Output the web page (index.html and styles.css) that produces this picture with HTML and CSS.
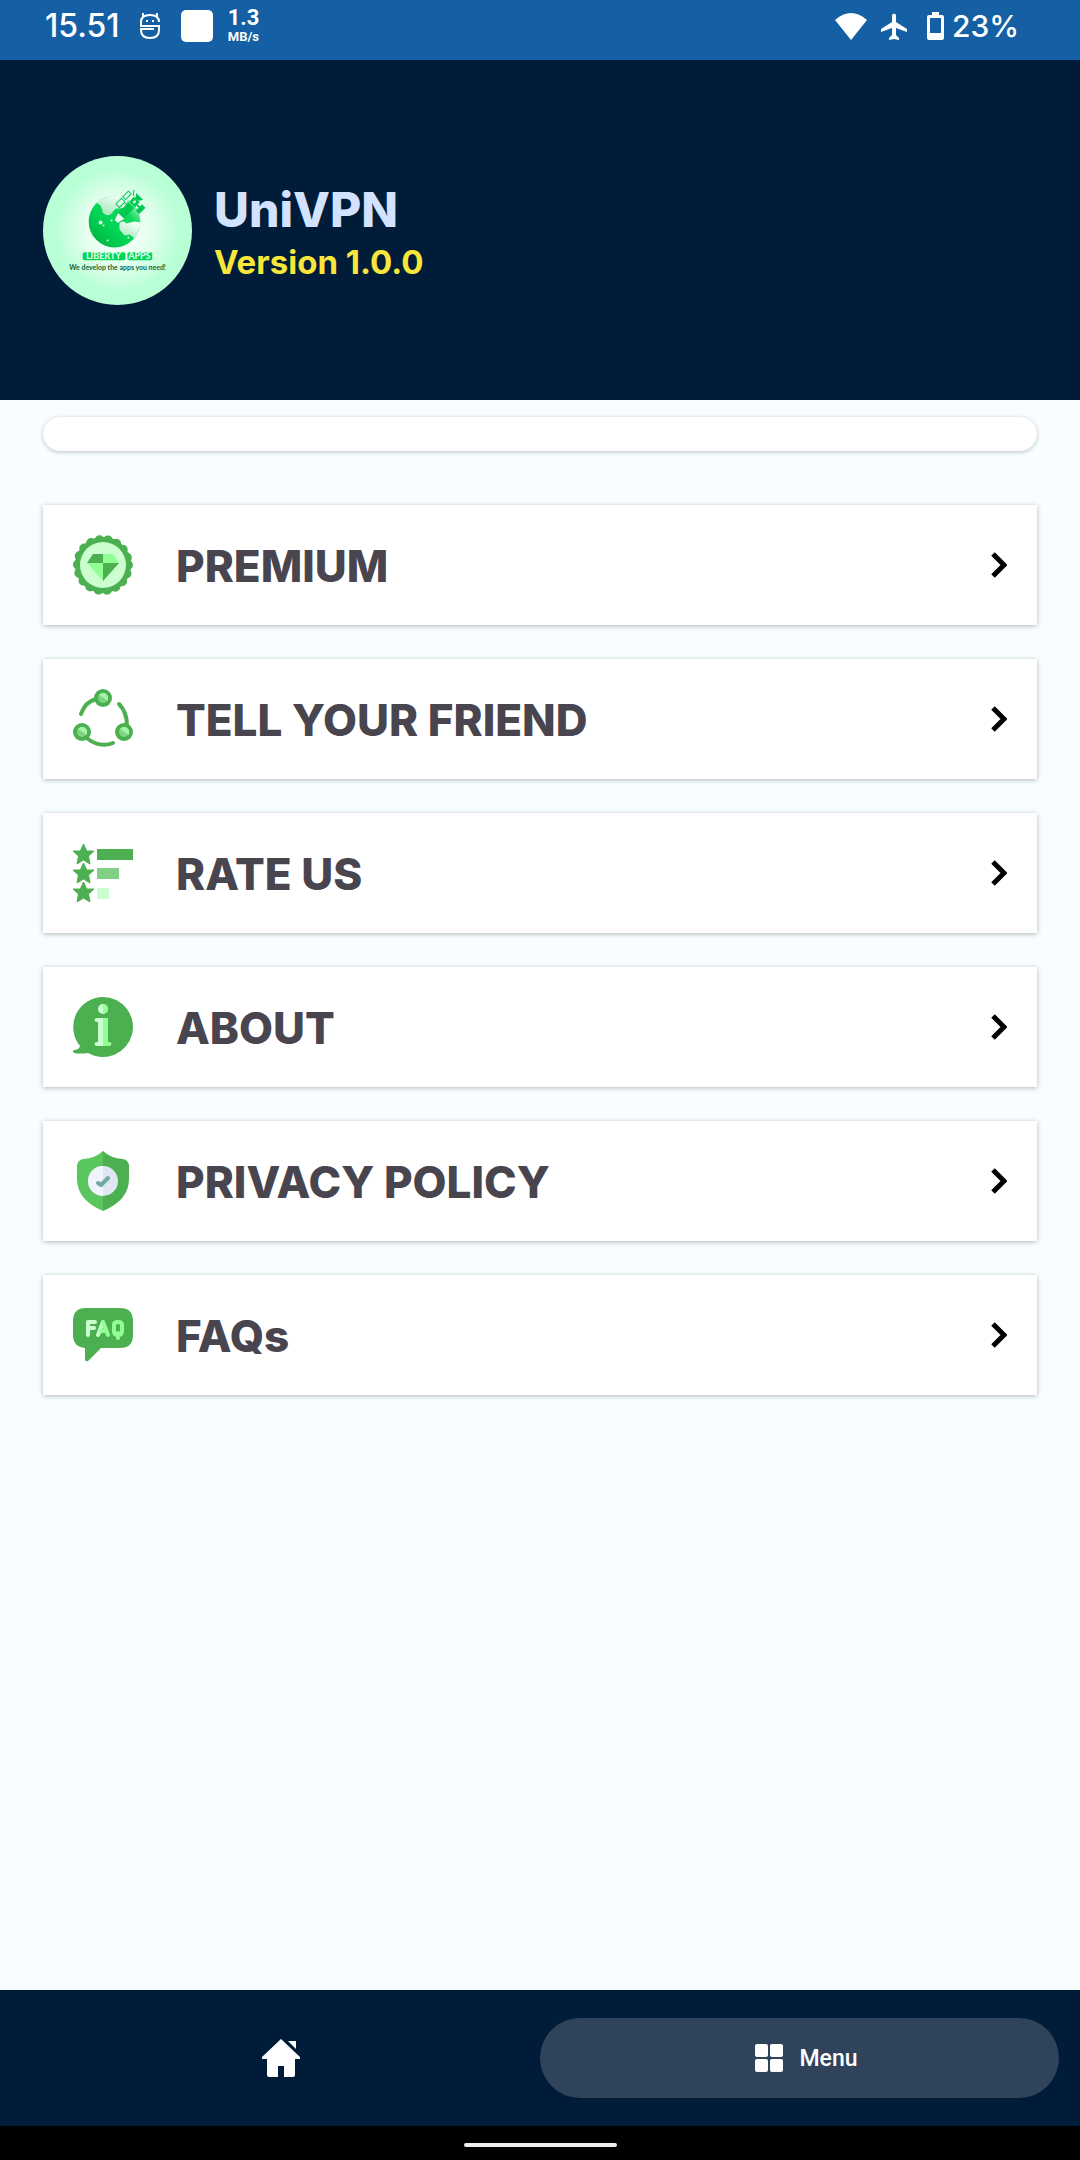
FILE: index.html
```html
<!DOCTYPE html>
<html lang="en">
  <head>
    <meta charset="UTF-8" />
    <meta name="viewport" content="width=device-width, initial-scale=1.0" />
    <title>UniVPN</title>
    <link rel="stylesheet" href="styles.css">
  </head>
  <body>
    <div class="status-bar">
      <div class="status-group">
        <span class="clock">15.51</span>
        <svg class="status-face" width="20" height="28" viewBox="0 0 20 28" fill="none" stroke="#fff" stroke-width="2">
          <path d="M19 10Q19 3 10 3T1 10V14H19V18Q19 26 10 26T1 18V17H14M3 1V5M17 1V5" />
          <path d="M6 9h2M12 9h2" />
        </svg>
        <span class="status-square"></span>
        <div class="net-speed">
          <b>1.3</b>
          <small>MB/s</small>
        </div>
      </div>
      <div class="status-group">
        <svg class="status-wifi" width="32" height="27" viewBox="0 0 32 27" fill="#fff">
          <path d="M0 7Q16-7 32 7L16 27Z" />
        </svg>
        <svg class="status-plane" width="26" height="27" viewBox="0 0 26 27" fill="#fff">
          <path d="M11 2Q13-1 15 2V9L26 16V19L15 15V22L18 25V27L13 26L8 27V25L11 22V15L0 19V16L11 9Z" />
        </svg>
        <svg width="17" height="28" viewBox="0 0 17 28" fill="#fff">
          <path fill-rule="evenodd" d="M5 0H12V3H15Q17 3 17 5V26Q17 28 15 28H2Q0 28 0 26V5Q0 3 2 3H5ZM3 6V21H14V6Z" />
        </svg>
        <span class="battery">23%</span>
      </div>
    </div>

    <header class="header">
      <svg class="avatar" viewBox="0 0 150 150" role="img" aria-label="Liberty Apps logo">
        <defs>
          <radialGradient id="glow">
            <stop offset="0" stop-color="#fff" />
            <stop offset="0.55" stop-color="#e4ffee" />
            <stop offset="1" stop-color="#b9ffd6" />
          </radialGradient>
          <linearGradient id="globe" x1="0" y1="1" x2="1" y2="0">
            <stop offset="0" stop-color="#00a83c" />
            <stop offset="0.4" stop-color="#00d455" />
            <stop offset="0.7" stop-color="#12da60" />
            <stop offset="1" stop-color="#f0fff6" />
          </linearGradient>
          <linearGradient id="land" x1="0" y1="1" x2="0.5" y2="0">
            <stop offset="0" stop-color="#9ae5b4" />
            <stop offset="1" stop-color="#f4fff8" />
          </linearGradient>
          <clipPath id="disc"><circle cx="72" cy="66" r="26" /></clipPath>
        </defs>
        <circle cx="75" cy="75" r="75" fill="#b9ffd6" />
        <circle cx="75" cy="75" r="62" fill="url(#glow)" />
        <circle cx="72" cy="66" r="26" fill="url(#globe)" />
        <g clip-path="url(#disc)">
          <path d="M53 47Q60 49 60 57Q64 61 68 59L73 53L82 52L88 38L60 38Z" fill="url(#land)" />
          <path d="M77 66Q82 65 84 68L92 66L100 67L94 84L87 79L82 80L77 74Z" fill="url(#land)" />
        </g>
        <g fill="#d8ffe6">
          <circle cx="58" cy="67" r="2" />
          <circle cx="61" cy="70" r="1" />
          <circle cx="69" cy="65" r="1" />
          <circle cx="65" cy="85" r="1" />
          <circle cx="86" cy="82" r="1" />
        </g>
        <g transform="translate(73 66) rotate(-46)">
          <path d="M0-2L9-5V5L0 3Z" fill="#effff5" stroke="#00c950" />
          <path d="M8-4H23V4H8Z" fill="#00c950" />
          <path d="M24-4H31V4H24ZM31-2L35-5V5L31 2Z" fill="#00c950" />
          <path d="M13-12H21V-7H13ZM23-12H31V-8H23ZM20-7V-4M31-5L36-9" fill="none" stroke="#00c950" />
          <path d="M22 7H31V12H22ZM26 4H28V7H26Z" fill="#00c950" />
          <path d="M26-1H29V1H26Z" fill="#fff" />
        </g>
        <rect x="40" y="97" width="43" height="8" rx="2" fill="#00d455" />
        <rect x="85" y="97" width="25" height="8" rx="2" fill="#00d455" />
        <text class="logo-name" x="61" y="104" text-anchor="middle">LIBERTY</text>
        <text class="logo-name" x="97" y="104" text-anchor="middle">APPS</text>
        <text class="logo-tagline" x="75" y="115" text-anchor="middle">We develop the apps you need!</text>
      </svg>
      <div class="app-info">
        <h1>UniVPN</h1>
        <p class="version">Version 1.0.0</p>
      </div>
    </header>

    <main class="content">
      <div class="banner"></div>

      <nav class="menu" aria-label="Menu">
        <a class="menu-item" href="#premium">
          <svg class="menu-icon" viewBox="0 0 60 60">
            <circle cx="30" cy="30" r="28" fill="#4caf50" />
            <circle cx="30" cy="30" r="25" fill="none" stroke="#4caf50" stroke-width="10" stroke-linecap="round" stroke-dasharray="0 8.727" />
            <circle cx="30" cy="30" r="23" fill="#ccffcf" />
            <path d="M20 19H40L46 28L30 46L14 28Z" fill="#90ff94" />
            <path d="M20 19H30V28H14ZM30 28H46L30 46Z" fill="#4caf50" />
          </svg>
          <span class="menu-label">PREMIUM</span>
          <svg class="chevron" viewBox="0 0 16 26"><path d="M2 2L13 13L2 24" /></svg>
        </a>
        <a class="menu-item" href="#share">
          <svg class="menu-icon" viewBox="0 0 60 60">
            <path d="M8 25Q12 13 23 10M46 15Q54 23 54 37M15 50Q27 59 40 54" fill="none" stroke="#4caf50" stroke-width="4" stroke-linecap="round" />
            <g fill="#4caf50">
              <circle cx="30" cy="9" r="9" />
              <circle cx="9" cy="43" r="9" />
              <circle cx="51" cy="43" r="9" />
            </g>
            <g fill="#7bd67f">
              <circle cx="30" cy="9" r="5" />
              <circle cx="9" cy="43" r="5" />
              <circle cx="51" cy="43" r="5" />
            </g>
            <path d="M26 6Q31 1 35 7V12ZM5 40Q10 35 14 41V46ZM47 40Q52 35 56 41V46Z" fill="#a5f2a8" />
          </svg>
          <span class="menu-label">TELL YOUR FRIEND</span>
          <svg class="chevron" viewBox="0 0 16 26"><path d="M2 2L13 13L2 24" /></svg>
        </a>
        <a class="menu-item" href="#rate">
          <svg class="menu-icon" viewBox="0 0 60 60">
            <defs>
              <path id="star" d="M10.500 0L13.700 7H21L15.500 12L17 20L10.500 16L4 20L5.500 12L0 7H7.300Z" />
            </defs>
            <g fill="#4caf50" stroke="#4caf50">
              <use href="#star" y="1" />
              <use href="#star" y="20" />
              <use href="#star" y="39" />
            </g>
            <path d="M24 6H60V17H24Z" fill="#4caf50" />
            <path d="M24 25H46V36H24Z" fill="#82cf85" />
            <path d="M24 45H36V56H24Z" fill="#ccffcf" />
          </svg>
          <span class="menu-label">RATE US</span>
          <svg class="chevron" viewBox="0 0 16 26"><path d="M2 2L13 13L2 24" /></svg>
        </a>
        <a class="menu-item" href="#about">
          <svg class="menu-icon" viewBox="0 0 60 60">
            <path d="M30 0A30 30 0 1 1 15 56Q8 57 1 56Q-1 54 1 53Q6 53 7 49A30 30 0 0 1 30 0Z" fill="#4caf50" />
            <circle cx="30" cy="12" r="5" fill="#ccffcf" />
            <path d="M30 7A5 5 0 0 1 30 17Z" fill="#90ff94" />
            <path d="M23 21H30V49H23Q20 47 23 45H25V25H23Q20 23 23 21Z" fill="#ccffcf" />
            <path d="M30 21H35V45H37Q40 47 37 49H30Z" fill="#90ff94" />
          </svg>
          <span class="menu-label">ABOUT</span>
          <svg class="chevron" viewBox="0 0 16 26"><path d="M2 2L13 13L2 24" /></svg>
        </a>
        <a class="menu-item" href="#privacy">
          <svg class="menu-icon" viewBox="0 0 60 60">
            <path d="M30 0Q37 7 50 8Q55 9 56 14V28Q56 49 30 60Z" fill="#4caf50" />
            <path d="M30 0Q23 7 10 8Q5 9 4 14V28Q4 49 30 60Z" fill="#5ac75e" />
            <circle cx="30" cy="30" r="15" fill="#dfe7f4" />
            <path d="M30 15A15 15 0 0 0 30 45Z" fill="#f0f4fc" />
            <path d="M25 32L28 34L35 27" fill="none" stroke="#6fa8a5" stroke-width="4" stroke-linecap="round" stroke-linejoin="round" />
          </svg>
          <span class="menu-label">PRIVACY POLICY</span>
          <svg class="chevron" viewBox="0 0 16 26"><path d="M2 2L13 13L2 24" /></svg>
        </a>
        <a class="menu-item" href="#faqs">
          <svg class="menu-icon" viewBox="0 0 60 60">
            <path d="M13 3H47Q60 3 60 16V30Q60 43 47 43H28L15 56Q12 57 12 54V43Q0 42 0 30V16Q0 3 13 3Z" fill="#4caf50" />
            <g fill="none" stroke-width="4" stroke-linecap="round" stroke-linejoin="round">
              <path d="M15 30V17H22M15 23H21M25 30L30 17" stroke="#ccffcf" />
              <path d="M30 17L35 30M28 26H32M45 33V28M41 20Q41 17 45 17T49 20V26Q49 30 45 30T41 26Z" stroke="#90ff94" />
            </g>
          </svg>
          <span class="menu-label">FAQs</span>
          <svg class="chevron" viewBox="0 0 16 26"><path d="M2 2L13 13L2 24" /></svg>
        </a>
      </nav>
    </main>

    <nav class="tab-bar" aria-label="Tabs">
      <a class="tab" href="#home" aria-label="Home">
        <svg width="40" height="40" viewBox="0 0 40 40" fill="#fff">
          <path d="M20 1L39 19V21H34V37Q34 39 32 39H23V28H17V39H8Q6 39 6 37V21H1V19Z" />
          <path d="M27 3H35V11Z" />
        </svg>
      </a>
      <a class="tab active" href="#menu" aria-current="page">
        <svg width="28" height="28" viewBox="0 0 28 28" fill="#fff">
          <rect width="13" height="13" rx="2" />
          <rect x="15" width="13" height="13" rx="2" />
          <rect y="15" width="13" height="13" rx="2" />
          <rect x="15" y="15" width="13" height="13" rx="2" />
        </svg>
        Menu
      </a>
    </nav>
    <div class="gesture-bar"><span></span></div>
  </body>
</html>
```
FILE: styles.css
```css
* {
  box-sizing: border-box;
}
body {
  display: flex;
  flex-direction: column;
  min-height: 100vh;
  margin: 0;
  font-family: Inter, Roboto, sans-serif;
  background: #f8fdff;
}
h1,
p {
  margin: 0;
}
a {
  color: inherit;
  text-decoration: none;
}

/* status bar */
.status-bar {
  display: flex;
  justify-content: space-between;
  height: 60px;
  padding: 0 61px 8px 45px;
  background: #1560a4;
  color: #fff;
  font: 500 32px/52px Inter, sans-serif;
}
.status-group {
  display: flex;
  align-items: center;
}
.status-face {
  margin-left: 20px;
}
.status-square {
  width: 32px;
  height: 32px;
  margin: 0 15px 0 21px;
  border-radius: 5px;
  background: #fff;
}
.net-speed {
  font-family: Roboto, sans-serif;
  text-align: center;
}
.net-speed b,
.net-speed small {
  display: block;
}
.net-speed b {
  font-size: 22px;
  font-weight: 700;
  line-height: 22px;
}
.net-speed small {
  font-size: 13px;
  font-weight: 700;
  line-height: 16px;
}
.status-plane {
  margin: 0 20px 0 14px;
}
.battery {
  margin-left: 8px;
  font-size: 30px;
}

/* app header */
.header {
  display: flex;
  align-items: center;
  gap: 22px;
  height: 340px;
  padding: 0 43px;
  background: #001c38;
}
.avatar {
  width: 149px;
  height: 149px;
}
.logo-name {
  fill: #d8ffe6;
  font: 900 9px Lato, sans-serif;
}
.logo-tagline {
  fill: #17653a;
  font: bold 7px Lato, sans-serif;
}
.app-info {
  padding-top: 8px;
}
.header h1 {
  color: #d3e3ff;
  font-size: 48px;
  font-weight: 800;
  line-height: 56px;
}
.version {
  color: #f8e63b;
  font-size: 33px;
  font-weight: 700;
  line-height: 48px;
}

/* menu list */
.content {
  flex: 1;
  padding: 17px 43px;
}
.banner {
  height: 34px;
  margin-bottom: 54px;
  border-radius: 17px;
  background: #fff;
  box-shadow: 0 1px 4px rgba(0, 0, 0, 0.25);
}
.menu {
  display: grid;
  gap: 34px;
}
.menu-item {
  display: flex;
  align-items: center;
  height: 120px;
  padding: 0 30px;
  background: #fff;
  box-shadow: 0 1px 5px rgba(0, 0, 0, 0.28);
}
.menu-icon {
  width: 60px;
  height: 60px;
  overflow: visible;
}
.menu-label {
  flex: 1;
  margin-left: 43px;
  padding-top: 2px;
  color: #48454e;
  font-size: 44px;
  font-weight: 800;
}
.chevron {
  width: 16px;
  height: 26px;
  fill: none;
  stroke: #000;
  stroke-width: 5px;
}

/* bottom tabs */
.tab-bar {
  display: grid;
  grid-template-columns: 1fr 1fr;
  padding: 28px 21px;
  background: #001c38;
}
.tab {
  display: flex;
  align-items: center;
  justify-content: center;
  gap: 16px;
  height: 80px;
  border-radius: 40px;
  color: #fff;
  font: 500 23px Roboto, sans-serif;
}
.tab.active {
  padding-left: 14px;
  background: #2f445b;
}
.gesture-bar {
  display: flex;
  align-items: center;
  justify-content: center;
  height: 34px;
  padding-top: 4px;
  background: #000;
}
.gesture-bar span {
  width: 153px;
  height: 4px;
  border-radius: 2px;
  background: #eee;
}
```
